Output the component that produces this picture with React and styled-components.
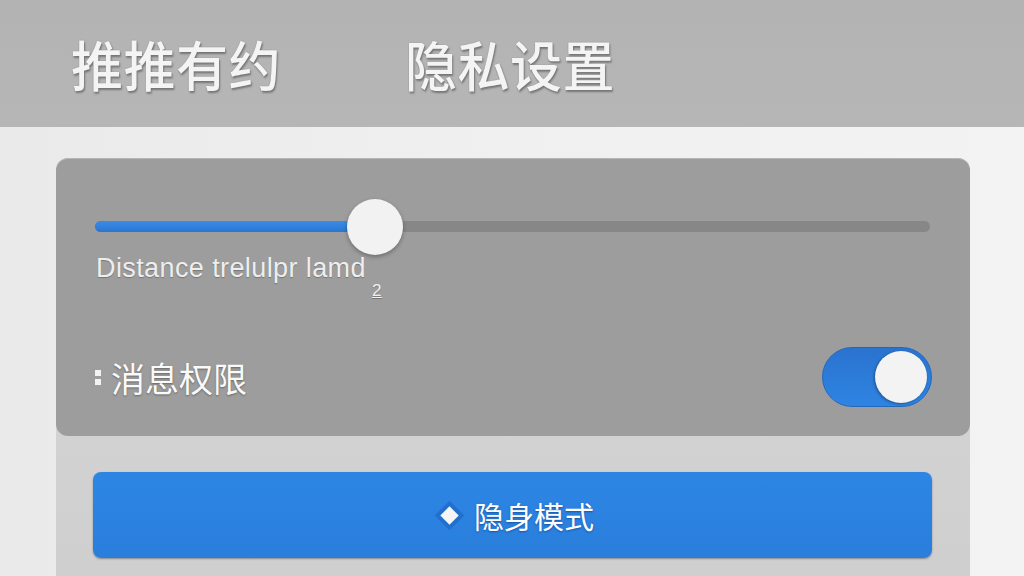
import React from "react";
import styled, { createGlobalStyle } from "styled-components";

const GlobalStyle = createGlobalStyle`
  html, body {
    margin: 0;
    padding: 0;
    width: 1024px;
    height: 576px;
    overflow: hidden;
    background: #ececec;
    font-family: "Noto Sans CJK SC", "Noto Sans", "Liberation Sans", sans-serif;
  }
`;

const Page = styled.div`
  width: 1024px;
  height: 576px;
  display: flex;
  flex-direction: column;
  background: linear-gradient(90deg, #eaeaea 0%, #f0f0f0 50%, #f3f3f3 100%);
`;

const Header = styled.header`
  height: 127px;
  flex-shrink: 0;
  display: flex;
  align-items: center;
  gap: 124px;
  padding-left: 71px;
  box-sizing: border-box;
  background: linear-gradient(180deg, #b3b3b3 0%, #b6b6b6 100%);
`;

const HeaderTitle = styled.h1`
  margin: 0;
  font-size: 52px;
  font-weight: 500;
  letter-spacing: 0.5px;
  color: #f4f4f4;
  transform: scaleY(1.04);
  text-shadow: 0 0 1px #6f6f6f, 1px 2px 2px rgba(0, 0, 0, 0.35);
`;

const Main = styled.main`
  flex: 1;
  padding: 31px 54px 0 56px;
  display: flex;
`;

const Card = styled.section`
  flex: 1;
  display: flex;
  flex-direction: column;
  border-radius: 12px 12px 0 0;
  background: linear-gradient(180deg, #d8d8d8 0%, #cfcfcf 100%);
`;

const Panel = styled.div`
  height: 278px;
  box-sizing: border-box;
  padding: 41px 38px 0 39px;
  border-radius: 12px;
  background: #9d9d9d;
  box-shadow: inset 0 1px 0 rgba(255, 255, 255, 0.25);
`;

const SliderBox = styled.div`
  position: relative;
  height: 56px;
`;

const Track = styled.div`
  position: absolute;
  left: 0;
  right: 2px;
  top: 22px;
  height: 11px;
  border-radius: 6px;
  background: #878787;
`;

const Fill = styled.div`
  height: 100%;
  border-radius: 6px;
  background: linear-gradient(180deg, #3a8be6 0%, #2a76d2 100%);
`;

const Thumb = styled.div`
  position: absolute;
  top: 0;
  width: 56px;
  height: 56px;
  margin-left: -28px;
  border-radius: 50%;
  background: #f2f2f2;
  box-shadow: 0 2px 4px rgba(0, 0, 0, 0.3);
`;

const SliderLabel = styled.div`
  position: relative;
  height: 26px;
  line-height: 26px;
  margin-left: 1px;
  font-family: "Liberation Sans", "Noto Sans", sans-serif;
  font-size: 27px;
  letter-spacing: 0.4px;
  color: #eeeeee;
  text-shadow: 0 1px 1px rgba(0, 0, 0, 0.25);
`;

const ValueMark = styled.span`
  position: absolute;
  top: 26px;
  margin-left: -4px;
  font-size: 17px;
  line-height: 20px;
  text-decoration: underline;
  color: #f0f0f0;
`;

const Row = styled.div`
  margin-top: 66px;
  height: 60px;
  display: flex;
  align-items: center;
  justify-content: space-between;
`;

const RowLabel = styled.div`
  display: flex;
  align-items: center;
  gap: 10px;
  font-size: 34px;
  color: #fafafa;
  text-shadow: 0 1px 2px rgba(0, 0, 0, 0.35);
`;

const Bullet = styled.span`
  display: flex;
  flex-direction: column;
  gap: 3px;
  &::before,
  &::after {
    content: "";
    width: 6px;
    height: 6px;
    background: #f3f3f3;
  }
`;

const Toggle = styled.div`
  width: 110px;
  height: 60px;
  box-sizing: border-box;
  border-radius: 30px;
  border: 1px solid #2468bd;
  background: linear-gradient(180deg, #2a73cf 0%, #2f84e2 100%);
  display: flex;
  align-items: center;
  justify-content: ${(p) => (p.$on ? "flex-end" : "flex-start")};
  padding: 0 4px;
`;

const Knob = styled.div`
  width: 52px;
  height: 52px;
  border-radius: 50%;
  background: #f3f3f3;
  box-shadow: -1px 1px 3px rgba(0, 0, 0, 0.35);
`;

const PrimaryButton = styled.button`
  margin: 36px 38px 0 37px;
  padding: 0 0 0 12px;
  height: 86px;
  border: none;
  border-radius: 8px;
  background: linear-gradient(180deg, #2d86e4 0%, #2a7edc 100%);
  box-shadow: 0 1px 2px rgba(0, 0, 0, 0.35);
  display: flex;
  align-items: center;
  justify-content: center;
  gap: 18px;
  font-family: inherit;
  font-size: 30px;
  color: #ffffff;
  text-shadow: 0 1px 2px rgba(0, 40, 110, 0.5);
`;

const Diamond = styled.span`
  width: 13px;
  height: 13px;
  background: #f5f5f5;
  transform: rotate(45deg);
  box-shadow: 0 0 0 4px rgba(30, 100, 190, 0.6);
`;

export default function App() {
  const value = 0.335;
  return (
    <>
      <GlobalStyle />
      <Page>
        <Header>
          <HeaderTitle>推推有约</HeaderTitle>
          <HeaderTitle>隐私设置</HeaderTitle>
        </Header>
        <Main>
          <Card>
            <Panel>
              <SliderBox>
                <Track>
                  <Fill style={{ width: `${value * 100}%` }} />
                </Track>
                <Thumb style={{ left: `${value * 100}%` }} />
              </SliderBox>
              <SliderLabel>
                Distance trelulpr lamd
                <ValueMark style={{ left: `${value * 100}%` }}>2</ValueMark>
              </SliderLabel>
              <Row>
                <RowLabel>
                  <Bullet />
                  消息权限
                </RowLabel>
                <Toggle $on>
                  <Knob />
                </Toggle>
              </Row>
            </Panel>
            <PrimaryButton>
              <Diamond />
              隐身模式
            </PrimaryButton>
          </Card>
        </Main>
      </Page>
    </>
  );
}
